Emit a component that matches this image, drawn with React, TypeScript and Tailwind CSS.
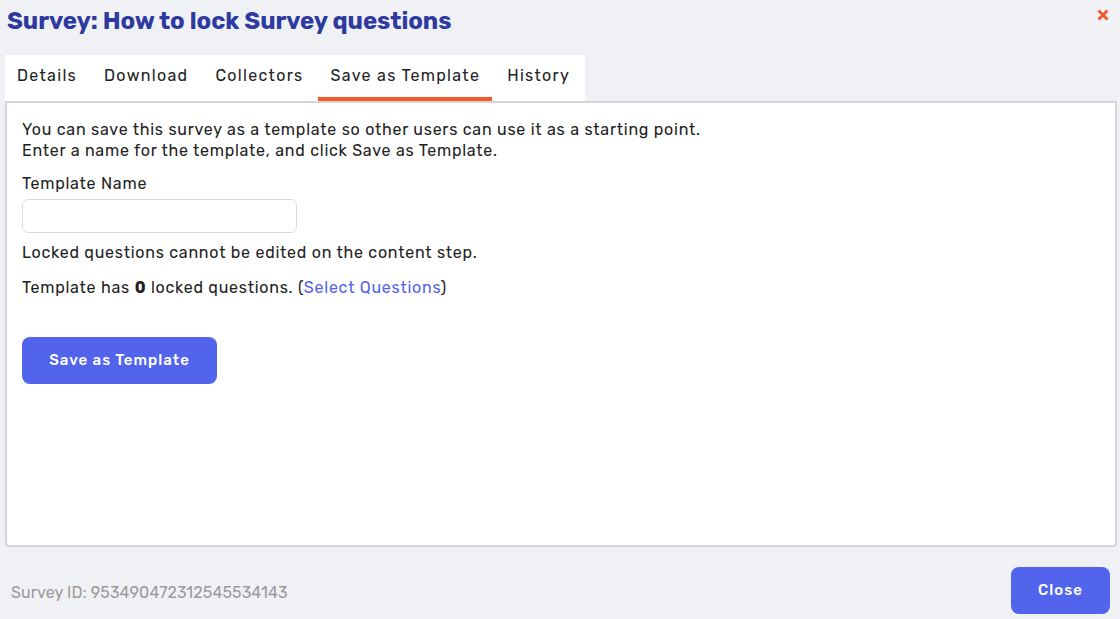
import React from "react";

export default function App() {
  const tabs = ["Details", "Download", "Collectors", "Save as Template", "History"];
  return (
    <div
      className="w-[1120px] h-[619px] bg-[#f0f1f5] flex flex-col text-[#222]"
      style={{ fontFamily: "Rubik, Inter, 'Noto Sans', sans-serif" }}
    >
      <div className="flex items-start justify-between h-[55px] pl-[7px] pr-[10px]">
        <h1 className="text-[24px] font-bold text-[#2e3a9f] leading-none mt-[9px] tracking-[-0.05px]">
          Survey: How to lock Survey questions
        </h1>
        <button className="mt-[8px] text-[#f25a29]">
          <svg width="14" height="14" viewBox="0 0 14 14">
            <path d="M2.5 2.5 L11.5 11.5 M11.5 2.5 L2.5 11.5" stroke="currentColor" strokeWidth="3" strokeLinecap="butt" />
          </svg>
        </button>
      </div>
      <div className="flex pl-[5px]">
        <div className="flex bg-white h-[46px] gap-[3px] pr-[3px]">
          {tabs.map((t, i) => (
            <div
              key={t}
              className={
                "pl-[12px] pr-[12px] flex items-center text-[16px] tracking-[1.3px] border-b-4 " +
                (i === 3 ? "border-[#f45a28]" : "border-transparent")
              }
            >
              {t}
            </div>
          ))}
        </div>
      </div>
      <div className="mx-[5px] mr-[3px] h-[446px] bg-white border-2 border-[#d4d5d8] rounded-b-[4px] px-[15px] pt-[16px] text-[16px] leading-[21px] tracking-[0.75px]">
        <p>You can save this survey as a template so other users can use it as a starting point.</p>
        <p>Enter a name for the template, and click Save as Template.</p>
        <label className="block mt-[12px]">Template Name</label>
        <input className="block mt-[5px] w-[275px] h-[34px] border border-[#dcdcdc] rounded-[6px] outline-none" />
        <p className="mt-[9px]">Locked questions cannot be edited on the content step.</p>
        <p className="mt-[14px]">
          Template has <b className="font-bold">0</b> locked questions. (
          <span className="text-[#5363ec]">Select Questions</span>)
        </p>
        <button className="mt-[39px] w-[195px] h-[47px] rounded-[8px] bg-[#5364ec] text-white text-[15px] tracking-[1px] font-medium">
          Save as Template
        </button>
      </div>
      <div className="flex items-center justify-between pl-[11px] pr-[10px] mt-[20px]">
        <span className="text-[16px] text-[#9a9a9a] tracking-[0.1px] mt-[4px]">Survey ID: 953490472312545534143</span>
        <button className="w-[99px] h-[47px] rounded-[8px] bg-[#5364ec] text-white text-[15px] tracking-[1px] font-medium">
          Close
        </button>
      </div>
    </div>
  );
}
